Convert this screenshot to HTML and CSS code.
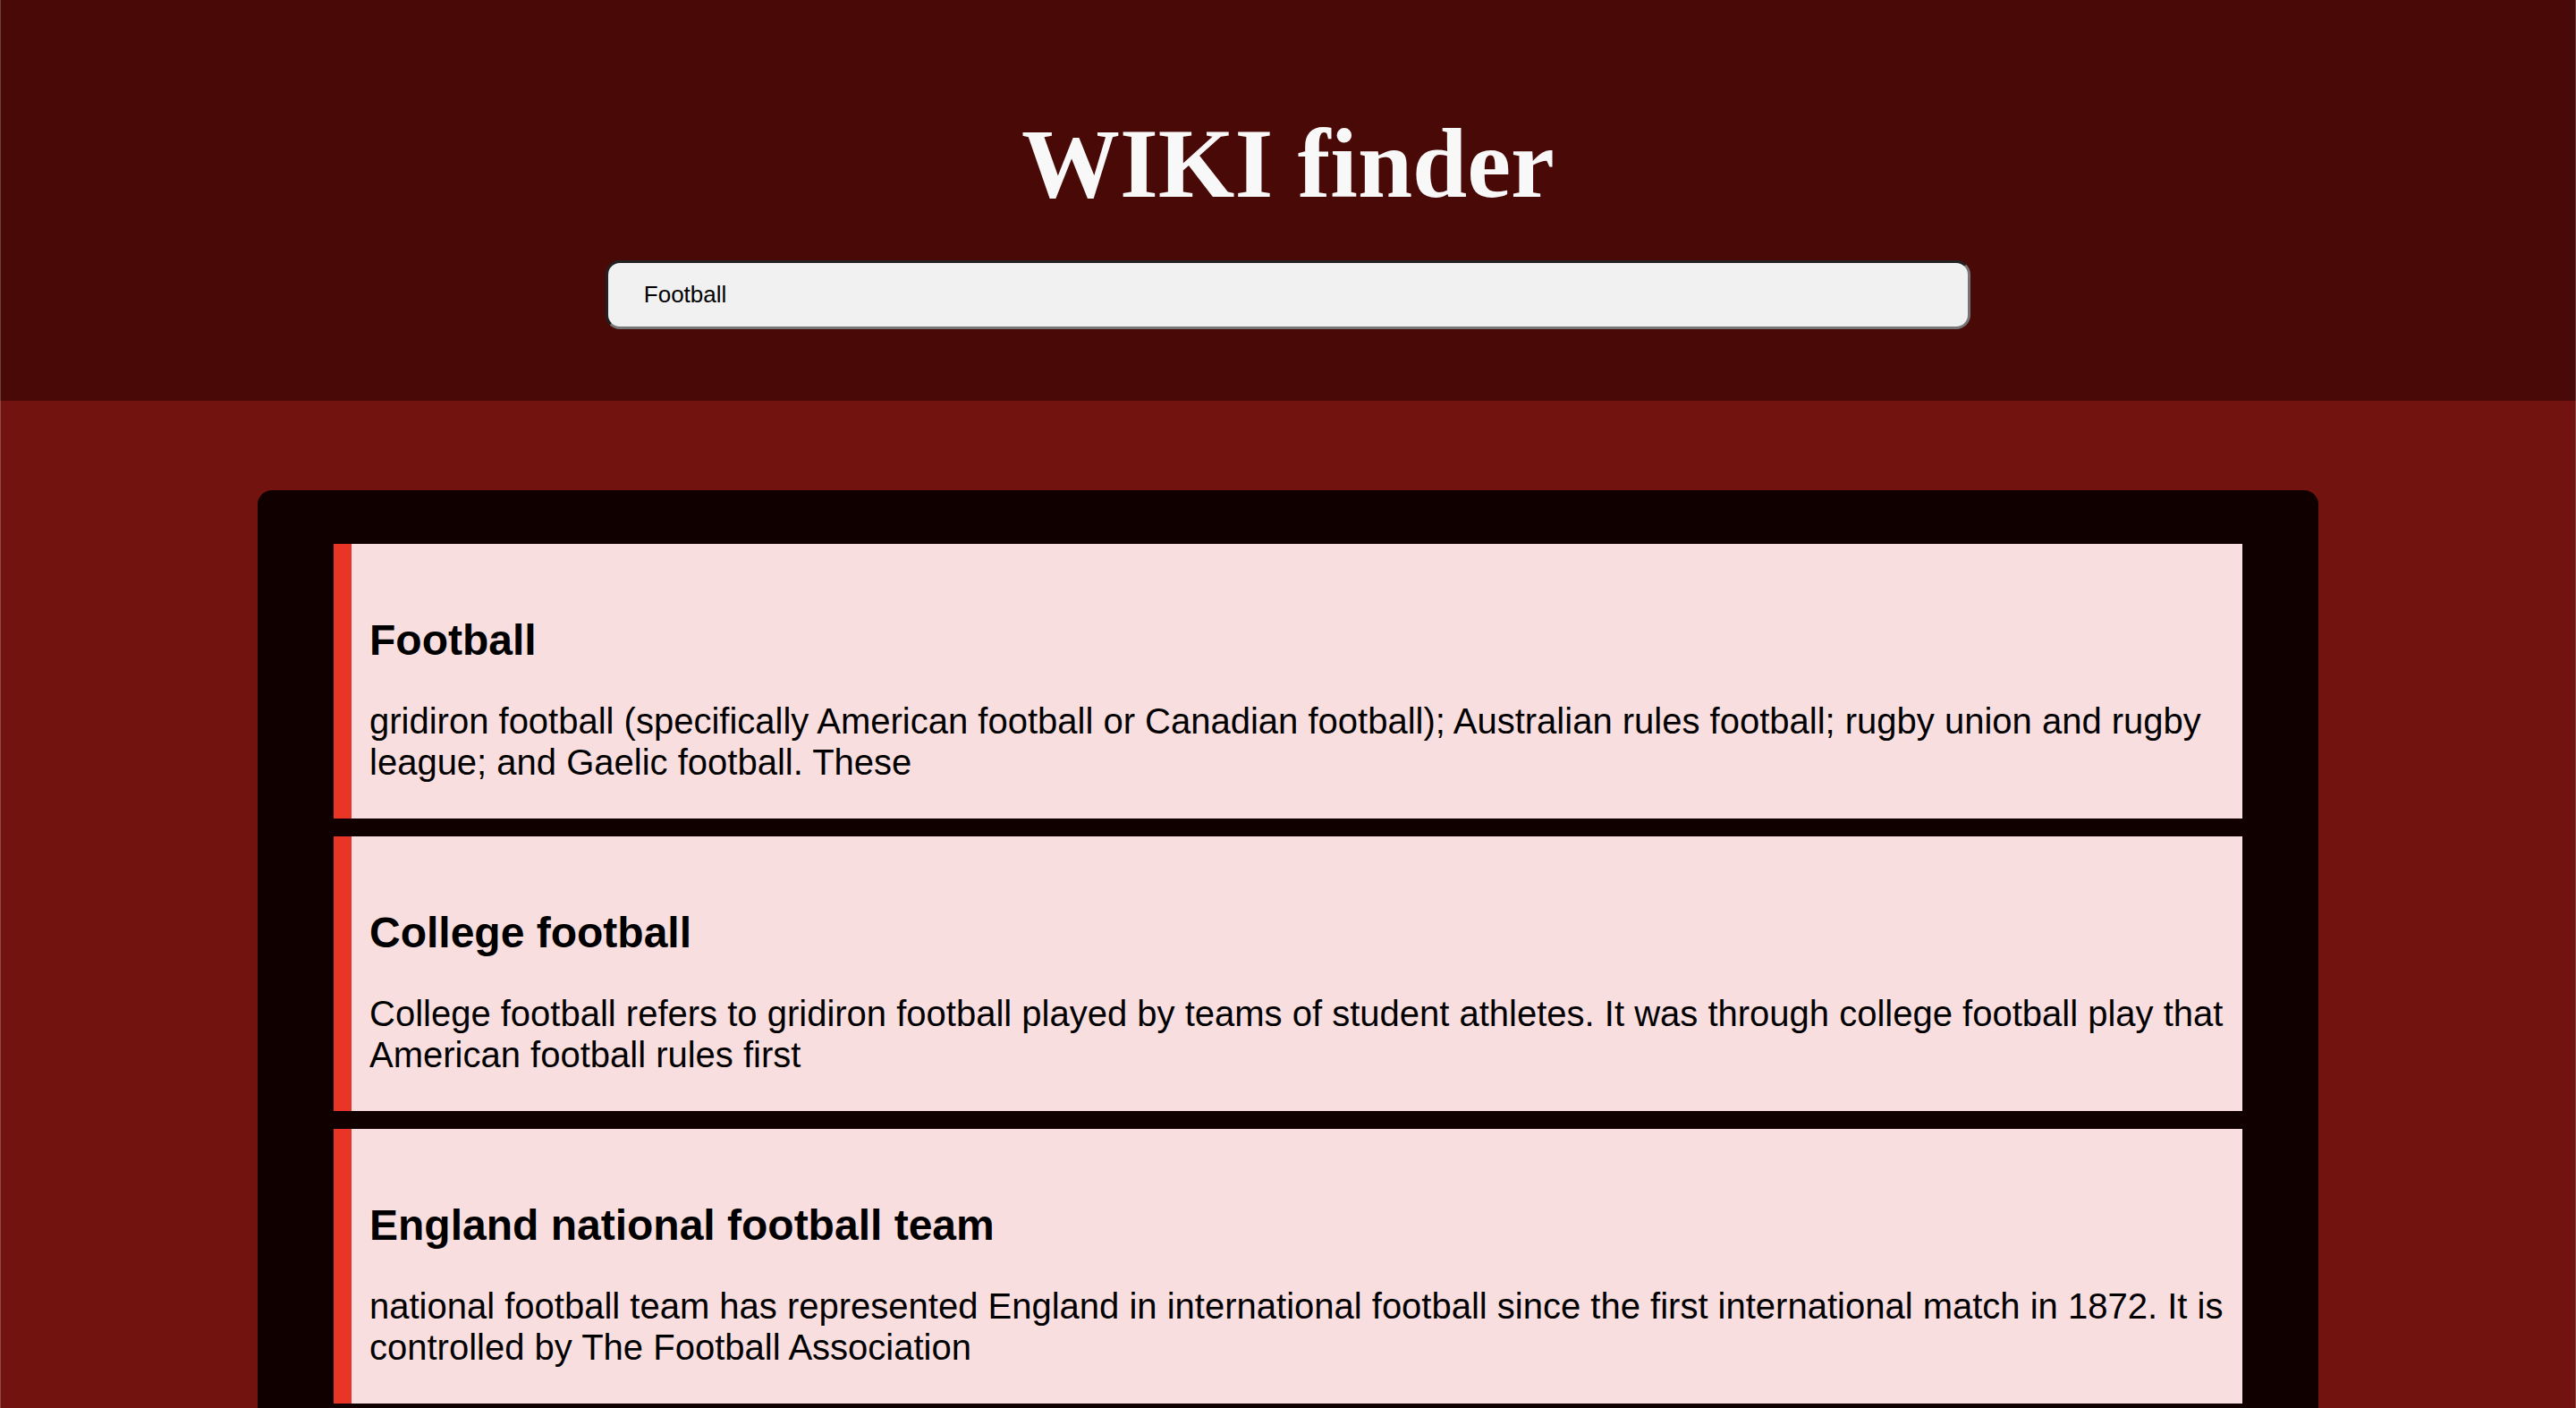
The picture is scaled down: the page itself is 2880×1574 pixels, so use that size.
FILE: index.html
```html
<!DOCTYPE html>
<html lang="en">
<head>
<meta charset="utf-8">
<title>WIKI finder</title>
<link rel="stylesheet" href="styles.css">
</head>
<body>
<header class="top">
  <h1 class="brand">WIKI finder</h1>
  <input class="search" type="text" value="Football">
</header>
<main class="main">
  <section class="results">
    <article class="result">
      <h2 class="result-title">Football</h2>
      <p class="result-text">gridiron football (specifically American football or Canadian football); Australian rules football; rugby union and rugby league; and Gaelic football. These</p>
    </article>
    <article class="result">
      <h2 class="result-title">College football</h2>
      <p class="result-text">College football refers to gridiron football played by teams of student athletes. It was through college football play that American football rules first</p>
    </article>
    <article class="result">
      <h2 class="result-title">England national football team</h2>
      <p class="result-text">national football team has represented England in international football since the first international match in 1872. It is controlled by The Football Association</p>
    </article>
  </section>
</main>
</body>
</html>
```

FILE: styles.css
```css
html, body {
  margin: 0;
  padding: 0;
}

body {
  font-family: "Liberation Sans", Arial, Helvetica, sans-serif;
  background: #73130f;
  min-height: 100vh;
}

body::after {
  content: "";
  position: fixed;
  inset: 0;
  border-left: 1px solid rgba(255, 255, 255, 0.22);
  border-right: 1px solid rgba(255, 255, 255, 0.22);
  pointer-events: none;
}

.top {
  background: #480907;
  padding: 120px 0 80px;
  display: flex;
  flex-direction: column;
  align-items: center;
}

.brand {
  margin: 0 0 44px;
  font-family: "Liberation Serif", "Times New Roman", serif;
  font-weight: bold;
  font-size: 110px;
  color: #f8f8f8;
  line-height: normal;
}

.search {
  box-sizing: border-box;
  width: 53%;
  height: 77px;
  padding: 0 40px;
  border-width: 3px;
  border-style: solid;
  border-color: #222222 #767676 #767676 #222222;
  border-radius: 16px;
  background: #f1f1f1;
  font-family: "Liberation Sans", Arial, Helvetica, sans-serif;
  font-size: 26px;
  color: #000;
  outline: none;
}

.main {
  padding-top: 100px;
}

.results {
  box-sizing: border-box;
  width: 80%;
  margin: 0 auto;
  background: #100000;
  border-radius: 16px 16px 0 0;
  padding: 60px 85px;
  display: flex;
  flex-direction: column;
  gap: 20px;
}

.result {
  background: #f9dedf;
  border-left: 20px solid #e83526;
  padding: 40px 20px 0;
  display: flow-root;
}

.result-title {
  margin: 40px 0;
  font-size: 48px;
  font-weight: bold;
  color: #000;
  line-height: 55px;
}

.result-text {
  margin: 40px 0;
  font-size: 40px;
  color: #000;
  line-height: 46px;
}
```
